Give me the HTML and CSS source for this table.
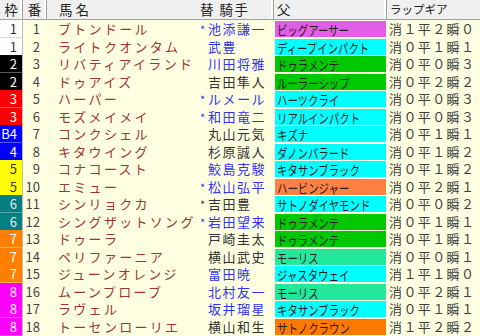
FILE: index.html
```html
<!DOCTYPE html>
<html lang="ja">
<head>
<meta charset="utf-8">
<link rel="stylesheet" href="styles.css">
</head>
<body>
<div class="table">
  <div class="head">
    <div class="h h-waku">枠</div>
    <div class="h h-ban">番</div>
    <div class="h h-name">馬名</div>
    <div class="h h-jockey">替&nbsp;騎手</div>
    <div class="h h-sire">父</div>
    <div class="h h-lap">ラップギア</div>
  </div>

  <div class="row"><div class="waku w1">1</div><div class="ban">1</div><div class="name">ブトンドール</div><div class="jockey blue"><span class="star">*</span>池添謙一</div><div class="sire"><span class="sbox s-pink"><span class="stext">ビッグアーサー</span></span></div><div class="lap">消１平２瞬０</div></div>
  <div class="row"><div class="waku w1">1</div><div class="ban">2</div><div class="name">ライトクオンタム</div><div class="jockey blue"><span class="star"></span>武豊</div><div class="sire"><span class="sbox s-cyan"><span class="stext">ディープインパクト</span></span></div><div class="lap">消０平１瞬１</div></div>
  <div class="row"><div class="waku w2">2</div><div class="ban">3</div><div class="name">リバティアイランド</div><div class="jockey blue"><span class="star"></span>川田将雅</div><div class="sire"><span class="sbox s-green"><span class="stext">ドゥラメンテ</span></span></div><div class="lap">消０平０瞬３</div></div>
  <div class="row"><div class="waku w2">2</div><div class="ban">4</div><div class="name">ドゥアイズ</div><div class="jockey"><span class="star"></span>吉田隼人</div><div class="sire"><span class="sbox s-green"><span class="stext">ルーラーシップ</span></span></div><div class="lap">消０平２瞬２</div></div>
  <div class="row"><div class="waku w3">3</div><div class="ban">5</div><div class="name">ハーパー</div><div class="jockey blue"><span class="star">*</span>ルメール</div><div class="sire"><span class="sbox s-cyan"><span class="stext">ハーツクライ</span></span></div><div class="lap">消０平０瞬３</div></div>
  <div class="row"><div class="waku w3">3</div><div class="ban">6</div><div class="name">モズメイメイ</div><div class="jockey blue"><span class="star">*</span>和田竜二</div><div class="sire"><span class="sbox s-cyan"><span class="stext">リアルインパクト</span></span></div><div class="lap">消０平０瞬３</div></div>
  <div class="row"><div class="waku w4">B4</div><div class="ban">7</div><div class="name">コンクシェル</div><div class="jockey"><span class="star"></span>丸山元気</div><div class="sire"><span class="sbox s-cyan"><span class="stext">キズナ</span></span></div><div class="lap">消０平１瞬１</div></div>
  <div class="row"><div class="waku w4">4</div><div class="ban">8</div><div class="name">キタウイング</div><div class="jockey"><span class="star"></span>杉原誠人</div><div class="sire"><span class="sbox s-cyan"><span class="stext">ダノンバラード</span></span></div><div class="lap">消０平１瞬２</div></div>
  <div class="row"><div class="waku w5">5</div><div class="ban">9</div><div class="name">コナコースト</div><div class="jockey blue"><span class="star"></span>鮫島克駿</div><div class="sire"><span class="sbox s-cyan"><span class="stext">キタサンブラック</span></span></div><div class="lap">消０平１瞬２</div></div>
  <div class="row"><div class="waku w5">5</div><div class="ban">10</div><div class="name">エミュー</div><div class="jockey blue"><span class="star">*</span>松山弘平</div><div class="sire"><span class="sbox s-orange"><span class="stext">ハービンジャー</span></span></div><div class="lap">消０平２瞬１</div></div>
  <div class="row"><div class="waku w6">6</div><div class="ban">11</div><div class="name">シンリョクカ</div><div class="jockey"><span class="star">*</span>吉田豊</div><div class="sire"><span class="sbox s-cyan"><span class="stext">サトノダイヤモンド</span></span></div><div class="lap">消０平０瞬２</div></div>
  <div class="row"><div class="waku w6">6</div><div class="ban">12</div><div class="name">シングザットソング</div><div class="jockey blue"><span class="star">*</span>岩田望来</div><div class="sire"><span class="sbox s-green"><span class="stext">ドゥラメンテ</span></span></div><div class="lap">消０平１瞬１</div></div>
  <div class="row"><div class="waku w7">7</div><div class="ban">13</div><div class="name">ドゥーラ</div><div class="jockey"><span class="star"></span>戸崎圭太</div><div class="sire"><span class="sbox s-green"><span class="stext">ドゥラメンテ</span></span></div><div class="lap">消０平１瞬１</div></div>
  <div class="row"><div class="waku w7">7</div><div class="ban">14</div><div class="name">ペリファーニア</div><div class="jockey"><span class="star"></span>横山武史</div><div class="sire"><span class="sbox s-spring"><span class="stext">モーリス</span></span></div><div class="lap">消０平０瞬１</div></div>
  <div class="row"><div class="waku w7">7</div><div class="ban">15</div><div class="name">ジューンオレンジ</div><div class="jockey blue"><span class="star"></span>富田暁</div><div class="sire"><span class="sbox s-cyan"><span class="stext">ジャスタウェイ</span></span></div><div class="lap">消１平１瞬０</div></div>
  <div class="row"><div class="waku w8">8</div><div class="ban">16</div><div class="name">ムーンプローブ</div><div class="jockey blue"><span class="star"></span>北村友一</div><div class="sire"><span class="sbox s-spring"><span class="stext">モーリス</span></span></div><div class="lap">消０平２瞬１</div></div>
  <div class="row"><div class="waku w8">8</div><div class="ban">17</div><div class="name">ラヴェル</div><div class="jockey blue"><span class="star"></span>坂井瑠星</div><div class="sire"><span class="sbox s-cyan"><span class="stext">キタサンブラック</span></span></div><div class="lap">消０平１瞬１</div></div>
  <div class="row"><div class="waku w8">8</div><div class="ban">18</div><div class="name">トーセンローリエ</div><div class="jockey"><span class="star"></span>横山和生</div><div class="sire"><span class="sbox s-dorange"><span class="stext">サトノクラウン</span></span></div><div class="lap">消１平２瞬２</div></div>
</div>
</body>
</html>
```

FILE: styles.css
```css
* { box-sizing: border-box; }
html, body {
  margin: 0;
  padding: 0;
  background: #ffffe1;
  width: 480px;
  height: 336px;
  overflow: hidden;
}
body {
  font-family: "Noto Sans CJK JP", "Noto Sans", sans-serif;
  color: #333;
}
.table {
  display: flex;
  flex-direction: column;
  width: 480px;
}
.head, .row {
  display: grid;
  grid-template-columns: 23px 24px 149px 78px 113px 93px;
}
.head {
  height: 20px;
  background: #f0f0f0;
  border-bottom: 1px solid #a0a0a0;
}
.h {
  font-size: 13.5px;
  line-height: 19px;
  color: #222;
  white-space: nowrap;
  border-right: 1px solid #a0a0a0;
  box-shadow: inset -2px 0 0 #ffffff;
}
.h-waku, .h-ban { text-align: center; }
.h-name { padding-left: 12px; letter-spacing: 3px; border-right: none; box-shadow: none; }
.h-jockey { padding-left: 4px; letter-spacing: 1.5px; }
.h-sire { padding-left: 3px; }
.h-lap { padding-left: 3px; font-size: 11.5px; border-right: none; box-shadow: none; }

.row {
  height: 17.5px;
  font-size: 13px;
  line-height: 17px;
  white-space: nowrap;
}
.waku {
  text-align: right;
  padding-right: 5px;
  font-size: 13px;
  color: #fff;
  border-bottom: 1px solid rgba(255,255,255,0.35);
  border-right: 1px solid #bbb;
}
.w1 { background: #ffffff; color: #333; border-bottom-color: #d8d8d8; }
.w2 { background: #000000; }
.w3 { background: #ff0000; }
.w4 { background: #0000ff; }
.w5 { background: #ffff00; color: #333; }
.w6 { background: #008080; color: #e8e8e8; }
.w7 { background: #ff8000; }
.w8 { background: #ff00ff; }

.ban {
  text-align: right;
  padding-right: 7px;
  font-size: 13px;
  color: #444;
}
.name {
  padding-left: 11px;
  color: #a03333;
  letter-spacing: 2.3px;
}
.jockey {
  padding-left: 4px;
  color: #333;
  letter-spacing: 1.5px;
}
.jockey.blue { color: #3333ee; }
.star {
  display: inline-block;
  width: 8px;
  font-size: 11px;
  letter-spacing: 0;
}
.sire {
  padding: 1px 1px 0 1px;
}
.sbox {
  display: block;
  height: 16px;
  padding-left: 2px;
  color: #222;
}
.stext {
  display: inline-block;
  font-size: 13px;
  line-height: 16px;
  transform: scaleX(0.8);
  transform-origin: left center;
}
.s-pink { background: #e35ee6; }
.s-cyan { background: #00ffff; }
.s-green { background: #00c800; }
.s-orange { background: #ff8040; }
.s-spring { background: #22e89c; }
.s-dorange { background: #ff7800; }
.lap {
  padding-left: 2px;
  color: #404040;
  letter-spacing: 1.4px;
}
```
